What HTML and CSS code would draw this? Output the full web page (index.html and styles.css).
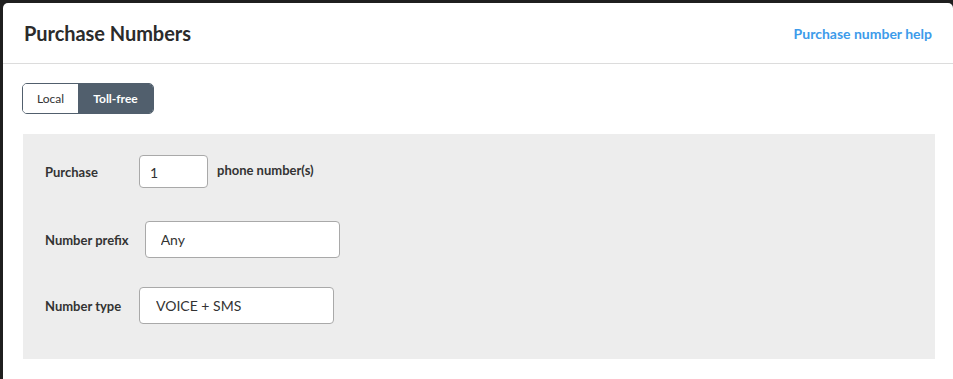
FILE: index.html
```html
<!DOCTYPE html>
<html lang="en">
<head>
<meta charset="utf-8">
<title>Purchase Numbers</title>
<link rel="stylesheet" href="styles.css">
</head>
<body>
<div class="panel">
  <header class="panel-header">
    <h1 class="title">Purchase Numbers</h1>
    <a class="help-link" href="#">Purchase number help</a>
  </header>
  <div class="panel-body">
    <div class="toggle">
      <button class="toggle-btn">Local</button>
      <button class="toggle-btn active">Toll-free</button>
    </div>
    <div class="form-box">
      <div class="form-row row-purchase">
        <span class="label">Purchase</span>
        <input class="input input-qty" type="text" value="1">
        <span class="suffix">phone number(s)</span>
      </div>
      <div class="form-row row-prefix">
        <span class="label">Number prefix</span>
        <input class="input input-wide input-prefix" type="text" value="Any">
      </div>
      <div class="form-row row-type">
        <span class="label">Number type</span>
        <input class="input input-wide" type="text" value="VOICE + SMS">
      </div>
    </div>
  </div>
</div>
</body>
</html>
```
FILE: styles.css
```css
* { box-sizing: border-box; }
html, body { margin: 0; height: 100%; }
body {
  background: #1f1f1f;
  font-family: Lato, "Open Sans", sans-serif;
  color: #333;
  padding: 3px 0 0 3px;
  overflow: hidden;
}
.panel {
  background: #fff;
  border-radius: 5px 5px 0 0;
  height: 100%;
}
.panel-header {
  height: 61px;
  border-bottom: 1px solid #dcdcdc;
  display: flex;
  align-items: center;
  justify-content: space-between;
  padding: 0 21px 0 21px;
}
.title {
  margin: 0;
  font-size: 20px;
  font-weight: 700;
  color: #2b2b2b;
  letter-spacing: -0.05px;
}
.help-link {
  color: #3d9bea;
  font-weight: 700;
  font-size: 14px;
  text-decoration: none;
}
.panel-body {
  padding: 19px 17px 20px 20px;
}
.toggle {
  display: inline-flex;
  margin-left: -1px;
  border: 1px solid #515f6d;
  border-radius: 5px;
  overflow: hidden;
  height: 31px;
}
.toggle-btn {
  font-family: inherit;
  font-size: 12px;
  border: 0;
  margin: 0;
  background: #fff;
  color: #333;
  padding: 0;
  cursor: pointer;
}
.toggle-btn:first-child { width: 55px; }
.toggle-btn.active {
  width: 75px;
  background: #515f6d;
  color: #fff;
  font-weight: 700;
}
.form-box {
  margin-top: 20px;
  margin-right: 1px;
  background: #ededed;
  padding: 21px 22px 35px 22px;
}
.form-row {
  display: flex;
  align-items: center;
}
.row-prefix { margin-top: 33px; }
.row-type { margin-top: 29px; }
.label {
  min-width: 78px;
  margin-right: 16px;
  font-size: 13px;
  font-weight: 700;
  color: #333;
}
.input {
  font-family: inherit;
  font-size: 14px;
  color: #333;
  background: #fff;
  border: 1px solid #a9a9a9;
  border-radius: 4px;
  outline: none;
}
.input-qty {
  width: 69px;
  height: 33px;
  padding: 2px 10px 0;
}
.suffix {
  margin-left: 9px;
  font-size: 13px;
  font-weight: 700;
  margin-top: -3px;
}
.input-wide {
  width: 195px;
  height: 37px;
  padding: 0 16px;
}
.input-prefix { padding-left: 15px; }
```
